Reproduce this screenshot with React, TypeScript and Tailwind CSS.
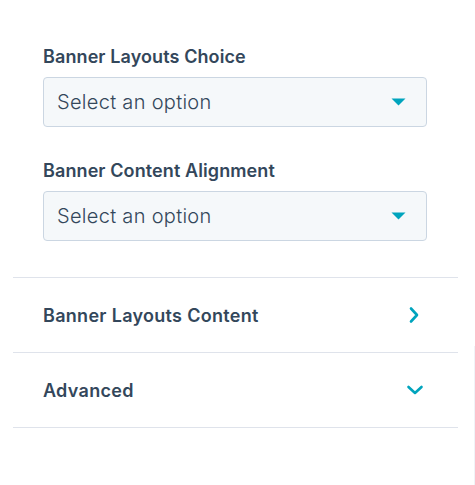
import React from "react";

const font = { fontFamily: "Inter, 'Noto Sans', sans-serif" };

function Caret() {
  return (
    <svg width="15" height="8" viewBox="0 0 15 8" className="shrink-0">
      <path d="M0.5 0.5 H14.5 L7.5 7.5 Z" fill="#00a4bd" />
    </svg>
  );
}

function SelectField({ label }: { label: string }) {
  return (
    <div className="flex flex-col">
      <div className="text-[18px] leading-[22px] font-semibold text-[#33475b] tracking-[0.1px]">{label}</div>
      <div className="mt-[9px] h-[50px] w-[384px] rounded-[4px] border border-[#cbd6e2] bg-[#f5f8fa] flex items-center justify-between pl-[13px] pr-[20px]">
        <span className="text-[20px] font-light text-[#33475b] tracking-[0.3px]">Select an option</span>
        <Caret />
      </div>
    </div>
  );
}

function Row({ label, icon }: { label: string; icon: "right" | "down" }) {
  return (
    <div className="h-[75px] flex items-center justify-between px-[30px] border-b border-[#dfe3eb]">
      <span className="text-[18px] font-semibold text-[#33475b] tracking-[0.3px]">{label}</span>
      {icon === "right" ? (
        <svg width="18" height="18" viewBox="0 0 18 18" className="mr-[5px]">
          <path d="M6 2.5 L12 9 L6 15.5" fill="none" stroke="#00a4bd" strokeWidth="2.6" strokeLinecap="round" strokeLinejoin="round" />
        </svg>
      ) : (
        <svg width="18" height="18" viewBox="0 0 18 18" className="mr-[4px]">
          <path d="M2.5 6 L9 12 L15.5 6" fill="none" stroke="#00a4bd" strokeWidth="2.6" strokeLinecap="round" strokeLinejoin="round" />
        </svg>
      )}
    </div>
  );
}

export default function App() {
  return (
    <div className="relative w-[475px] h-[485px] bg-white overflow-hidden" style={font}>
      <div className="ml-[13px] w-[445px]">
        <div className="px-[30px] pt-[46px] pb-[36px] flex flex-col gap-[33px] border-b border-[#dfe3eb]">
          <SelectField label="Banner Layouts Choice" />
          <SelectField label="Banner Content Alignment" />
        </div>
        <Row label="Banner Layouts Content" icon="right" />
        <Row label="Advanced" icon="down" />
      </div>
      <div className="absolute right-0 top-[346px] bottom-0 w-px bg-[#f0f3f7]" />
    </div>
  );
}
